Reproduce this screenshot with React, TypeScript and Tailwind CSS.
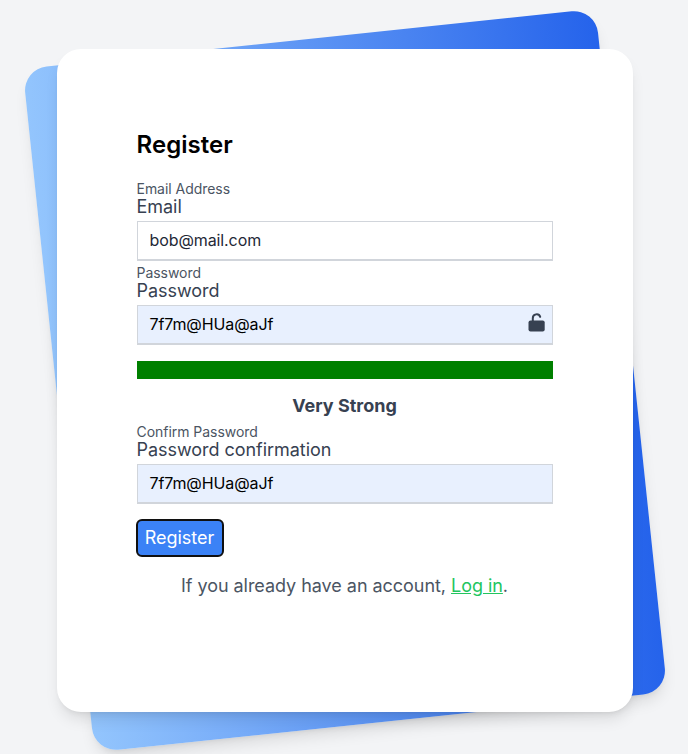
import React from "react";

type FieldProps = {
  caption: string;
  label: string;
  value: string;
  filled?: boolean;
  children?: React.ReactNode;
};

function Field({ caption, label, value, filled, children }: FieldProps) {
  return (
    <div>
      <div className="h-[18px] text-sm leading-[18px] text-[#4b5563]">{caption}</div>
      <div className="h-[18px] text-lg leading-[18px] text-[#374151]">{label}</div>
      <div
        className={
          "mt-[5px] flex h-10 items-center justify-between border border-b-2 border-[#d1d5db] pr-[7px] pl-3 text-base tracking-[-0.1px] " +
          (filled ? "bg-[#e8f0fe] text-black" : "bg-white text-[#1f2937]")
        }
      >
        <span className="pb-[2px]">{value}</span>
        {children}
      </div>
    </div>
  );
}

function UnlockIcon() {
  return (
    <svg className="mb-[5px] h-5 w-[17px]" viewBox="0 0 17 20" fill="none">
      <path d="M4.8 10V6.2A3.8 3.8 0 0 1 12.2 4.9" stroke="#374151" strokeWidth="2" strokeLinecap="round" />
      <rect x="0.5" y="8.4" width="16.2" height="11.2" rx="2" fill="#374151" />
    </svg>
  );
}

export default function App() {
  return (
    <div className="h-[754px] overflow-hidden bg-[#f3f4f6] pt-[49px] pl-[56.5px] font-['Inter',sans-serif] tracking-[-0.04px]">
      <div className="relative h-[663px] w-[576px]">
        <div className="absolute inset-x-0 -inset-y-3 -rotate-6 rounded-3xl bg-linear-to-r/srgb from-[#93c5fd] to-[#2563eb] shadow-lg" />
        <div className="relative h-full rounded-3xl bg-white px-20 pt-20 shadow-lg">
          <h1 className="text-2xl font-semibold tracking-[0.06px] text-black">Register</h1>
          <div className="mt-[19px]">
            <Field caption="Email Address" label="Email" value="bob@mail.com" />
          </div>
          <div className="mt-[3px]">
            <Field caption="Password" label="Password" value="7f7m@HUa@aJf" filled>
              <UnlockIcon />
            </Field>
          </div>
          <div className="mt-4 h-[18px] bg-[#008000]" />
          <p className="mt-[13px] text-center text-lg font-bold tracking-normal text-[#374151]">Very Strong</p>
          <div className="mt-[3px]">
            <Field caption="Confirm Password" label="Password confirmation" value="7f7m@HUa@aJf" filled />
          </div>
          <button className="mt-[15px] -ml-px block h-[38px] w-[88px] rounded-md border-2 border-[#101010] bg-[#3b82f6] text-lg leading-none tracking-normal text-white">
            Register
          </button>
          <p className="mt-[15px] text-center text-lg text-[#4b5563]">
            If you already have an account, <a className="text-[#22c55e] underline">Log in</a>.
          </p>
        </div>
      </div>
    </div>
  );
}
